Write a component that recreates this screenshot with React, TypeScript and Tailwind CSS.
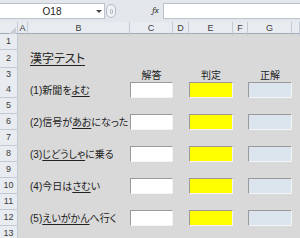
const COLS = "grid grid-cols-[18px_10px_102px_43px_16px_44px_15px_44px_1fr]";
const FONT = "font-['Liberation_Sans','Noto_Sans_CJK_JP',sans-serif]";

type Q = { num: number; pre: string; mark: string; post: string };

const questions: Record<number, Q> = {
  4: { num: 1, pre: "新聞を", mark: "よむ", post: "" },
  6: { num: 2, pre: "信号が", mark: "あお", post: "になった" },
  8: { num: 3, pre: "", mark: "じどうしゃ", post: "に乗る" },
  10: { num: 4, pre: "今日は", mark: "さむ", post: "い" },
  12: { num: 5, pre: "", mark: "えいがかん", post: "へ行く" },
};

const rowHeights: Record<number, string> = {
  1: "h-[16px]",
  2: "h-[18px]",
  3: "h-[14px]",
};

function RowHead({ n }: { n: number }) {
  return (
    <div className="flex items-center justify-center border-r border-b border-[#c3cad3] bg-[#e8ecf1] text-[9px] text-[#3b3b3b]">
      {n}
    </div>
  );
}

function Box({ color }: { color: string }) {
  return (
    <div
      className={`h-full w-full border-t border-l border-t-[#9a9a9a] border-l-[#9a9a9a] border-r border-b border-r-[#f4f4f4] border-b-[#f4f4f4] ${color}`}
    />
  );
}

function Row({ n }: { n: number }) {
  const q = questions[n];
  const h = rowHeights[n] ?? "h-[16px]";
  return (
    <div className={`${COLS} ${h} bg-[#d9d9d9]`}>
      <RowHead n={n} />
      <div />
      <div className="flex items-center pl-[2px] text-[10px] text-[#222] whitespace-nowrap [font-feature-settings:'palt']">
        {n === 2 && (
          <span className="text-[12px] underline underline-offset-2 decoration-1">漢字テスト</span>
        )}
        {q && (
          <span>
            ({q.num}){q.pre}
            <span className="underline underline-offset-2 decoration-1">{q.mark}</span>
            {q.post}
          </span>
        )}
      </div>
      <div className="flex items-end justify-center text-[10px] text-[#222]">
        {n === 3 && "解答"}
        {q && <Box color="bg-white" />}
      </div>
      <div />
      <div className="flex items-end justify-center text-[10px] text-[#222]">
        {n === 3 && "判定"}
        {q && <Box color="bg-[#ffff00]" />}
      </div>
      <div />
      <div className="flex items-end justify-center text-[10px] text-[#222]">
        {n === 3 && "正解"}
        {q && <Box color="bg-[#dce4ee]" />}
      </div>
      <div />
    </div>
  );
}

export default function App() {
  const cols = ["A", "B", "C", "D", "E", "F", "G", ""];
  return (
    <div className={`w-[300px] h-[238px] overflow-hidden bg-[#d9d9d9] ${FONT}`}>
      {/* formula bar */}
      <div className="h-[22px] bg-[#e3e7ec] pt-[3px]">
        <div className="flex h-[16px] items-stretch">
          <div className="relative flex w-[105px] items-center justify-center border-y border-r border-[#b9c2cd] bg-white text-[10px] text-[#222]">
            O18
            <span className="absolute right-[2px] top-[6px] h-0 w-0 border-x-[3px] border-t-[3px] border-x-transparent border-t-[#444]" />
          </div>
          <div className="flex w-[12px] items-center">
            <div className="ml-[1px] flex h-[14px] w-[10px] items-center justify-center rounded-full border border-[#b3bcc7] bg-[#eef1f5]">
              <div className="h-[5px] w-[3px] rounded-full border border-[#a7b0bb]" />
            </div>
          </div>
          <div className="flex-1" />
          <div className="flex w-[15px] items-center justify-center font-serif text-[9px] italic text-[#333]">
            fx
          </div>
          <div className="w-[137px] border-y border-l border-[#b9c2cd] bg-white" />
        </div>
      </div>
      {/* column headers */}
      <div className={`${COLS} h-[12px] border-b border-[#9fabb9] bg-[#e8ecf1] text-[9px] text-[#3b3b3b]`}>
        <div className="flex items-end justify-end border-r border-[#c3cad3] pr-[1px] pb-[1px]">
          <svg width="8" height="8" viewBox="0 0 8 8">
            <path d="M8 0 L8 8 L0 8 Z" fill="#c9ced6" />
          </svg>
        </div>
        {cols.map((c, i) => (
          <div key={i} className="flex items-center justify-center border-r border-[#c3cad3]">
            {c}
          </div>
        ))}
      </div>
      {Array.from({ length: 13 }, (_, i) => (
        <Row key={i + 1} n={i + 1} />
      ))}
    </div>
  );
}
